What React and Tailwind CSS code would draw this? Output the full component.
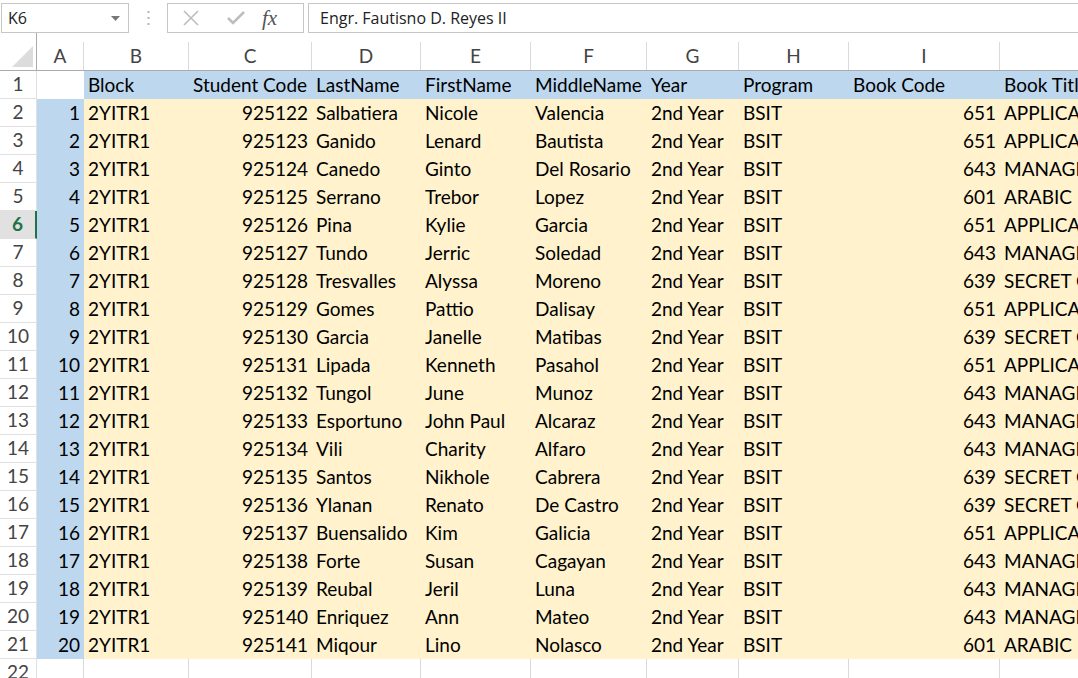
import React from 'react';

// column widths in px: row header, A..J
const cols = [
  { key: 'A', w: 'w-[47px]' },
  { key: 'B', w: 'w-[105px]' },
  { key: 'C', w: 'w-[123px]' },
  { key: 'D', w: 'w-[109px]' },
  { key: 'E', w: 'w-[110px]' },
  { key: 'F', w: 'w-[116px]' },
  { key: 'G', w: 'w-[92px]' },
  { key: 'H', w: 'w-[110px]' },
  { key: 'I', w: 'w-[151px]' },
  { key: '', w: 'w-[260px]' },
];

const titles = {
  651: 'APPLICATIONS DEVELOPMENT',
  643: 'MANAGING INFORMATION',
  601: 'ARABIC FOR BEGINNERS',
  639: 'SECRET OF SUCCESS',
};

const students = [
  ['925122', 'Salbatiera', 'Nicole', 'Valencia', 651],
  ['925123', 'Ganido', 'Lenard', 'Bautista', 651],
  ['925124', 'Canedo', 'Ginto', 'Del Rosario', 643],
  ['925125', 'Serrano', 'Trebor', 'Lopez', 601],
  ['925126', 'Pina', 'Kylie', 'Garcia', 651],
  ['925127', 'Tundo', 'Jerric', 'Soledad', 643],
  ['925128', 'Tresvalles', 'Alyssa', 'Moreno', 639],
  ['925129', 'Gomes', 'Pattio', 'Dalisay', 651],
  ['925130', 'Garcia', 'Janelle', 'Matibas', 639],
  ['925131', 'Lipada', 'Kenneth', 'Pasahol', 651],
  ['925132', 'Tungol', 'June', 'Munoz', 643],
  ['925133', 'Esportuno', 'John Paul', 'Alcaraz', 643],
  ['925134', 'Vili', 'Charity', 'Alfaro', 643],
  ['925135', 'Santos', 'Nikhole', 'Cabrera', 639],
  ['925136', 'Ylanan', 'Renato', 'De Castro', 639],
  ['925137', 'Buensalido', 'Kim', 'Galicia', 651],
  ['925138', 'Forte', 'Susan', 'Cagayan', 643],
  ['925139', 'Reubal', 'Jeril', 'Luna', 643],
  ['925140', 'Enriquez', 'Ann', 'Mateo', 643],
  ['925141', 'Miqour', 'Lino', 'Nolasco', 601],
];

const headers = ['', 'Block', 'Student Code', 'LastName', 'FirstName', 'MiddleName', 'Year', 'Program', 'Book Code', 'Book Title'];

function RowHeader({ n, active }) {
  return (
    <div
      className={`w-[37px] shrink-0 h-full flex items-center justify-center border-b border-r border-[#e1e1e1] ${
        active ? 'bg-[#e1e1e1] text-[#217346] font-bold border-r-2 border-r-[#217346]' : 'bg-white text-[#444]'
      }`}
    >
      {n}
    </div>
  );
}

function Cell({ w, right, bg, children }) {
  return (
    <div className={`${w} shrink-0 h-full flex items-center px-[4px] whitespace-nowrap overflow-hidden ${right ? 'justify-end' : ''} ${bg}`}>
      {children}
    </div>
  );
}

export default function App() {
  return (
    <div className="w-[1078px] h-[678px] overflow-hidden bg-white font-['Lato','Liberation_Sans',sans-serif] text-[19px] text-black">
      {/* formula bar */}
      <div className="flex items-center pt-[3px] h-[33px] font-['Open_Sans','Liberation_Sans',sans-serif] text-[16px]">
        <div className="ml-[1px] w-[128px] h-[30px] border border-[#c6c6c6] flex items-center justify-between pl-[6px] pr-[8px] text-[#222]">
          <span>K6</span>
          <svg width="9" height="5" viewBox="0 0 9 5"><path d="M0 0h9L4.5 5z" fill="#777" /></svg>
        </div>
        <div className="w-[38px] flex justify-center">
          <svg width="3" height="14" viewBox="0 0 3 14">
            <rect x="0.5" y="0" width="2" height="2" fill="#b5b5b5" />
            <rect x="0.5" y="6" width="2" height="2" fill="#b5b5b5" />
            <rect x="0.5" y="12" width="2" height="2" fill="#b5b5b5" />
          </svg>
        </div>
        <div className="w-[137px] h-[30px] border border-[#c6c6c6] flex items-center">
          <svg className="ml-[15px]" width="16" height="16" viewBox="0 0 16 16">
            <path d="M1 1L15 15M15 1L1 15" stroke="#bdbdbd" strokeWidth="1.6" />
          </svg>
          <svg className="ml-[28px]" width="18" height="14" viewBox="0 0 18 14">
            <path d="M1 7l5 5L17 1" stroke="#bdbdbd" strokeWidth="2.6" fill="none" />
          </svg>
          <span className="ml-[17px] font-['Liberation_Serif',serif] italic text-[21px] text-[#555] leading-none">fx</span>
        </div>
        <div className="ml-[4px] flex-1 h-[30px] border border-[#c6c6c6] border-r-0 flex items-center pl-[11px] text-[#222]">
          Engr. Fautisno D. Reyes II
        </div>
      </div>

      {/* column headers */}
      <div className="flex h-[38px] border-b border-[#ababab] text-[#444]">
        <div className="w-[37px] shrink-0 h-full flex items-end justify-end border-r border-[#ababab]">
          <svg className="mb-[3px] mr-[3px]" width="21" height="21" viewBox="0 0 21 21">
            <path d="M21 0V21H0z" fill="#dcdcdc" />
          </svg>
        </div>
        {cols.map((c) => (
          <div key={c.key} className={`${c.w} shrink-0 h-full flex items-end`}>
            <div className="w-full h-[28px] flex items-center justify-center border-r border-[#dadada]">{c.key}</div>
          </div>
        ))}
      </div>

      {/* row 1: table header */}
      <div className="flex h-[28px]">
        <RowHeader n={1} />
        {cols.map((c, i) => (
          <Cell key={c.key} w={c.w} bg={i === 0 ? 'bg-white' : 'bg-[#bdd7ee]'}>
            {headers[i]}
          </Cell>
        ))}
      </div>

      {/* data rows */}
      {students.map((s, idx) => {
        const [code, last, first, middle, book] = s;
        const vals = [idx + 1, '2YITR1', code, last, first, middle, '2nd Year', 'BSIT', book, titles[book]];
        const rightCols = [0, 2, 8];
        return (
          <div key={code} className="flex h-[28px]">
            <RowHeader n={idx + 2} active={idx + 2 === 6} />
            {cols.map((c, i) => (
              <Cell key={c.key} w={c.w} right={rightCols.includes(i)} bg={i === 0 ? 'bg-[#bdd7ee]' : 'bg-[#fff2cc]'}>
                {vals[i]}
              </Cell>
            ))}
          </div>
        );
      })}

      {/* empty row 22 */}
      <div className="flex h-[28px]">
        <RowHeader n={22} />
        {cols.map((c) => (
          <div key={c.key} className={`${c.w} shrink-0 h-full border-r border-b border-[#dadada]`} />
        ))}
      </div>
    </div>
  );
}
